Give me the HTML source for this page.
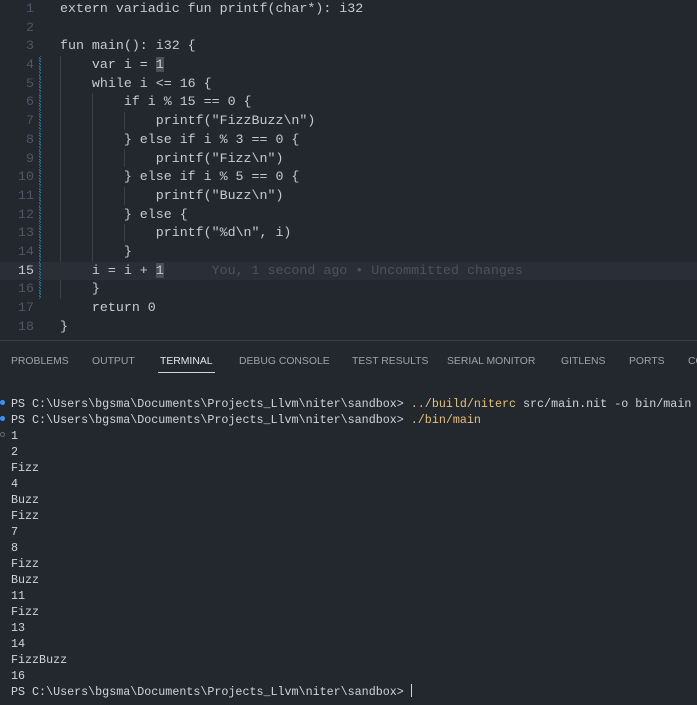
<!DOCTYPE html>
<html><head><style>
html,body{margin:0;padding:0;background:#23272e;width:697px;height:705px;overflow:hidden;}
body{position:relative;font-family:"Liberation Mono",monospace;}
.code{position:absolute;left:0;top:0px;width:697px;}
.ln{position:relative;height:18.7px;line-height:18.7px;font-size:13.3px;white-space:pre;color:#c5cad3;}
.num{position:absolute;left:0;width:34px;text-align:right;color:#4f5665;}
.cur .num{color:#c5cad3;}
.txt{position:absolute;left:60px;}
.cur{background:#2a2e36;}
.gut{position:absolute;left:39px;width:2px;height:18.7px;background:repeating-linear-gradient(45deg,#2c7a9e 0 1px,#23272e 1px 2px);}
.guide{position:absolute;width:1px;background:#3a3f4a;}
.hl{background:#4a4f58;}
.blame{color:#4d525c;}
.sep{position:absolute;left:0;top:340px;width:697px;height:1px;background:#3b404a;}
.tabs{position:absolute;top:356px;left:0;font-family:"Liberation Sans",sans-serif;font-size:10.4px;color:#9da2ab;white-space:nowrap;}
.tabs span{position:absolute;top:0;}
.term{position:absolute;left:11px;top:396px;font-size:11.7px;line-height:16px;color:#d0d4da;white-space:pre;}
.y{color:#e5c07b;}
.dot{position:absolute;left:0;width:5px;height:5px;border-radius:50%;}
</style></head><body>
<div class="guide" style="left:60px;top:56px;height:243px"></div>
<div class="guide" style="left:92px;top:93px;height:187px"></div>
<div class="guide" style="left:124px;top:112px;height:18px"></div>
<div class="guide" style="left:124px;top:149px;height:18px"></div>
<div class="guide" style="left:124px;top:187px;height:18px"></div>
<div class="guide" style="left:124px;top:224px;height:18px"></div>
<div class="code">
<div class="ln"><span class="num">1</span><span class="txt">extern variadic fun printf(char*): i32</span></div>
<div class="ln"><span class="num">2</span></div>
<div class="ln"><span class="num">3</span><span class="txt">fun main(): i32 {</span></div>
<div class="ln"><span class="gut"></span><span class="num">4</span><span class="txt">    var i = <span class="hl">1</span></span></div>
<div class="ln"><span class="gut"></span><span class="num">5</span><span class="txt">    while i &lt;= 16 {</span></div>
<div class="ln"><span class="gut"></span><span class="num">6</span><span class="txt">        if i % 15 == 0 {</span></div>
<div class="ln"><span class="gut"></span><span class="num">7</span><span class="txt">            printf("FizzBuzz\n")</span></div>
<div class="ln"><span class="gut"></span><span class="num">8</span><span class="txt">        } else if i % 3 == 0 {</span></div>
<div class="ln"><span class="gut"></span><span class="num">9</span><span class="txt">            printf("Fizz\n")</span></div>
<div class="ln"><span class="gut"></span><span class="num">10</span><span class="txt">        } else if i % 5 == 0 {</span></div>
<div class="ln"><span class="gut"></span><span class="num">11</span><span class="txt">            printf("Buzz\n")</span></div>
<div class="ln"><span class="gut"></span><span class="num">12</span><span class="txt">        } else {</span></div>
<div class="ln"><span class="gut"></span><span class="num">13</span><span class="txt">            printf("%d\n", i)</span></div>
<div class="ln"><span class="gut"></span><span class="num">14</span><span class="txt">        }</span></div>
<div class="ln cur"><span class="gut"></span><span class="num">15</span><span class="txt">    i = i + <span class="hl">1</span>      <span class="blame">You, 1 second ago • Uncommitted changes</span></span></div>
<div class="ln"><span class="gut"></span><span class="num">16</span><span class="txt">    }</span></div>
<div class="ln"><span class="num">17</span><span class="txt">    return 0</span></div>
<div class="ln"><span class="num">18</span><span class="txt">}</span></div>
</div>
<div class="sep"></div>
<div class="tabs">
<span style="left:11px">PROBLEMS</span>
<span style="left:92px">OUTPUT</span>
<span style="left:160px;color:#e6e8eb">TERMINAL</span>
<span style="left:239px">DEBUG CONSOLE</span>
<span style="left:352px">TEST RESULTS</span>
<span style="left:447px">SERIAL MONITOR</span>
<span style="left:561px">GITLENS</span>
<span style="left:629px">PORTS</span>
<span style="left:688px">CO</span>
</div>
<div style="position:absolute;left:158px;top:372px;width:57px;height:1px;background:#d0d4da"></div>
<div class="dot" style="top:400px;background:#3794ff"></div>
<div class="dot" style="top:416px;background:#3794ff"></div>
<div class="dot" style="top:432px;border:1px solid #666;width:3px;height:3px"></div>
<div class="term">PS C:\Users\bgsma\Documents\Projects_Llvm\niter\sandbox&gt; <span class="y">../build/niterc</span> src/main.nit -o bin/main
PS C:\Users\bgsma\Documents\Projects_Llvm\niter\sandbox&gt; <span class="y">./bin/main</span>
1
2
Fizz
4
Buzz
Fizz
7
8
Fizz
Buzz
11
Fizz
13
14
FizzBuzz
16
PS C:\Users\bgsma\Documents\Projects_Llvm\niter\sandbox&gt; <span style="display:inline-block;width:1px;height:13px;background:#d0d4da;vertical-align:-2px"></span></div>
</body></html>
